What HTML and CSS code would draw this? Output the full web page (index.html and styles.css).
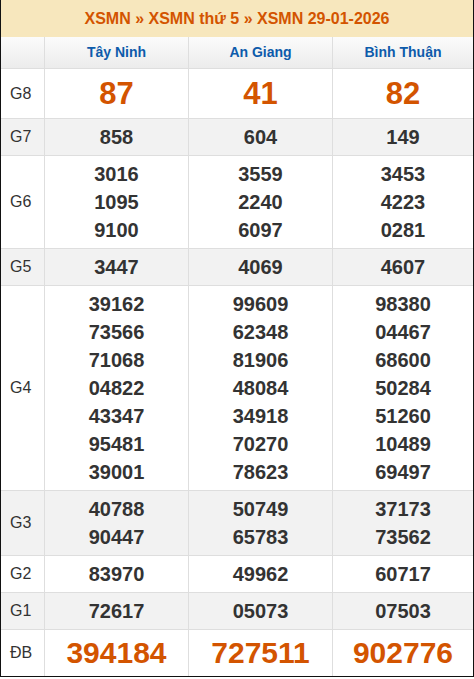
FILE: index.html
```html
<!DOCTYPE html>
<html lang="vi">
<head>
<meta charset="utf-8">
<title>XSMN 29-01-2026</title>
<link rel="stylesheet" href="styles.css">
</head>
<body>
<div class="box">
  <div class="title">XSMN » XSMN thứ 5 » XSMN 29-01-2026</div>
  <div class="row head">
    <div class="lbl"></div>
    <div class="cell">Tây Ninh</div>
    <div class="cell">An Giang</div>
    <div class="cell">Bình Thuận</div>
  </div>
  <div class="row g8">
    <div class="lbl">G8</div>
    <div class="cell big">87</div>
    <div class="cell big">41</div>
    <div class="cell big">82</div>
  </div>
  <div class="row alt">
    <div class="lbl">G7</div>
    <div class="cell">858</div>
    <div class="cell">604</div>
    <div class="cell">149</div>
  </div>
  <div class="row">
    <div class="lbl">G6</div>
    <div class="cell"><span>3016</span><span>1095</span><span>9100</span></div>
    <div class="cell"><span>3559</span><span>2240</span><span>6097</span></div>
    <div class="cell"><span>3453</span><span>4223</span><span>0281</span></div>
  </div>
  <div class="row alt">
    <div class="lbl">G5</div>
    <div class="cell">3447</div>
    <div class="cell">4069</div>
    <div class="cell">4607</div>
  </div>
  <div class="row">
    <div class="lbl">G4</div>
    <div class="cell"><span>39162</span><span>73566</span><span>71068</span><span>04822</span><span>43347</span><span>95481</span><span>39001</span></div>
    <div class="cell"><span>99609</span><span>62348</span><span>81906</span><span>48084</span><span>34918</span><span>70270</span><span>78623</span></div>
    <div class="cell"><span>98380</span><span>04467</span><span>68600</span><span>50284</span><span>51260</span><span>10489</span><span>69497</span></div>
  </div>
  <div class="row alt">
    <div class="lbl">G3</div>
    <div class="cell"><span>40788</span><span>90447</span></div>
    <div class="cell"><span>50749</span><span>65783</span></div>
    <div class="cell"><span>37173</span><span>73562</span></div>
  </div>
  <div class="row">
    <div class="lbl">G2</div>
    <div class="cell">83970</div>
    <div class="cell">49962</div>
    <div class="cell">60717</div>
  </div>
  <div class="row alt">
    <div class="lbl">G1</div>
    <div class="cell">72617</div>
    <div class="cell">05073</div>
    <div class="cell">07503</div>
  </div>
  <div class="row db">
    <div class="lbl">ĐB</div>
    <div class="cell big">394184</div>
    <div class="cell big">727511</div>
    <div class="cell big">902776</div>
  </div>
</div>
</body>
</html>
```
FILE: styles.css
```css
html, body {
  margin: 0;
  padding: 0;
  background: #fff;
}
body {
  font-family: "Liberation Sans", Arial, sans-serif;
  color: #333;
}
.box {
  width: 474px;
  box-sizing: border-box;
  border: 1px solid #111;
  border-top: none;
}
.title {
  height: 37px;
  background: #f7e7bd;
  color: #d35400;
  font-weight: bold;
  font-size: 16px;
  line-height: 37px;
  text-align: center;
}
.row {
  display: grid;
  grid-template-columns: 43px 144px 144px 1fr;
  border-bottom: 1px solid #dedede;
}
.row.db {
  border-bottom: none;
}
.row.alt {
  background: #f2f2f2;
}
.lbl {
  display: flex;
  align-items: center;
  padding-left: 9px;
  font-size: 16px;
  color: #333;
}
.cell {
  border-left: 1px solid #dedede;
  display: flex;
  flex-direction: column;
  align-items: center;
  justify-content: center;
  padding: 4px 0;
  font-size: 20px;
  font-weight: bold;
  line-height: 28px;
  color: #333;
}
.head {
  background: linear-gradient(#fbfbfb, #ececec);
}
.head .cell {
  height: 31px;
  padding: 0;
  box-sizing: border-box;
  font-size: 14px;
  line-height: 31px;
  color: #0d5bab;
}
.big {
  font-size: 31px;
  color: #d35400;
}
.g8 .cell {
  line-height: 41px;
}
.db .cell {
  font-size: 30px;
  line-height: 38px;
}
```
